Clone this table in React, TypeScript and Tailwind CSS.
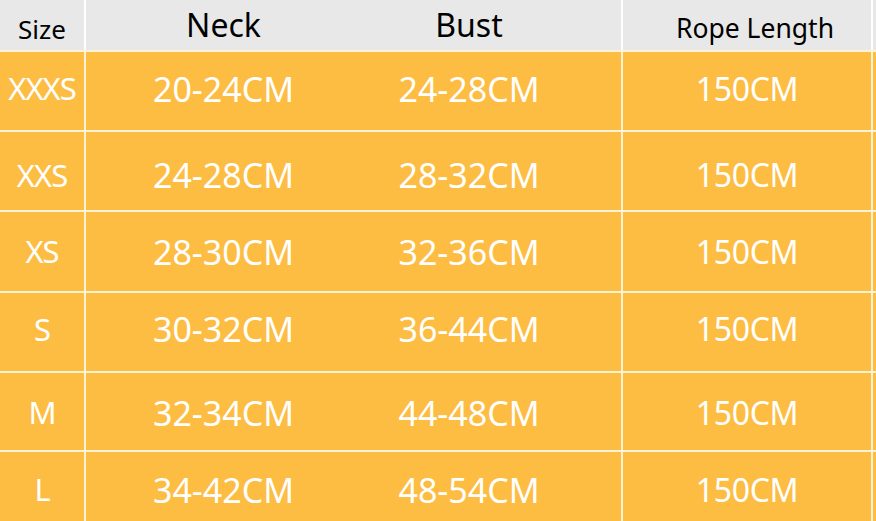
const rows = [
  { size: "XXXS", neck: "20-24CM", bust: "24-28CM", rope: "150CM", h: "h-[78px] pb-[5px]" },
  { size: "XXS", neck: "24-28CM", bust: "28-32CM", rope: "150CM", h: "h-[78px] pt-[8px]" },
  { size: "XS", neck: "28-30CM", bust: "32-36CM", rope: "150CM", h: "h-[79px]" },
  { size: "S", neck: "30-32CM", bust: "36-44CM", rope: "150CM", h: "h-[78px] pb-[6px]" },
  { size: "M", neck: "32-34CM", bust: "44-48CM", rope: "150CM", h: "h-[77px] pt-[2px]" },
  { size: "L", neck: "34-42CM", bust: "48-54CM", rope: "150CM", h: "h-[69px] pt-[6px]" },
];

export default function App() {
  return (
    <div
      className="w-[876px] h-[521px] overflow-hidden bg-[#fdf1d6] flex flex-col gap-[2px]"
      style={{ fontFamily: '"Noto Sans", "Open Sans", sans-serif' }}
    >
      {/* header */}
      <div className="h-[50px] grid grid-cols-[84px_535px_248px_1fr] gap-x-[2px] bg-white shrink-0">
        <div className="bg-[#e8e8e8] flex items-center justify-center pt-[7px] text-[26px] text-black leading-none">
          Size
        </div>
        <div className="bg-[#e8e8e8] grid grid-cols-[275px_216px_1fr] text-[32px] text-black leading-none">
          <div className="flex items-center justify-center">Neck</div>
          <div className="flex items-center justify-center">Bust</div>
          <div></div>
        </div>
        <div className="bg-[#e8e8e8] flex items-center justify-center pt-[6px] pl-[16px] text-[26.5px] text-black leading-none">
          Rope Length
        </div>
        <div className="bg-[#e8e8e8]"></div>
      </div>

      {rows.map((r) => (
        <div
          key={r.size}
          className="grid grid-cols-[84px_535px_248px_1fr] gap-x-[2px] shrink-0 text-white leading-none"
        >
          <div className={`${r.h} bg-[#fdbd42] flex items-center justify-center text-[31px] tracking-[-1px]`}>
            {r.size}
          </div>
          <div className={`${r.h} bg-[#fdbd42] grid grid-cols-[275px_216px_1fr] text-[34px]`}>
            <div className="flex items-center justify-center">{r.neck}</div>
            <div className="flex items-center justify-center">{r.bust}</div>
            <div></div>
          </div>
          <div className={`${r.h} bg-[#fdbd42] flex items-center justify-center text-[32px] tracking-[-0.3px]`}>
            {r.rope}
          </div>
          <div className={`${r.h} bg-[#fdbd42]`}></div>
        </div>
      ))}
    </div>
  );
}
